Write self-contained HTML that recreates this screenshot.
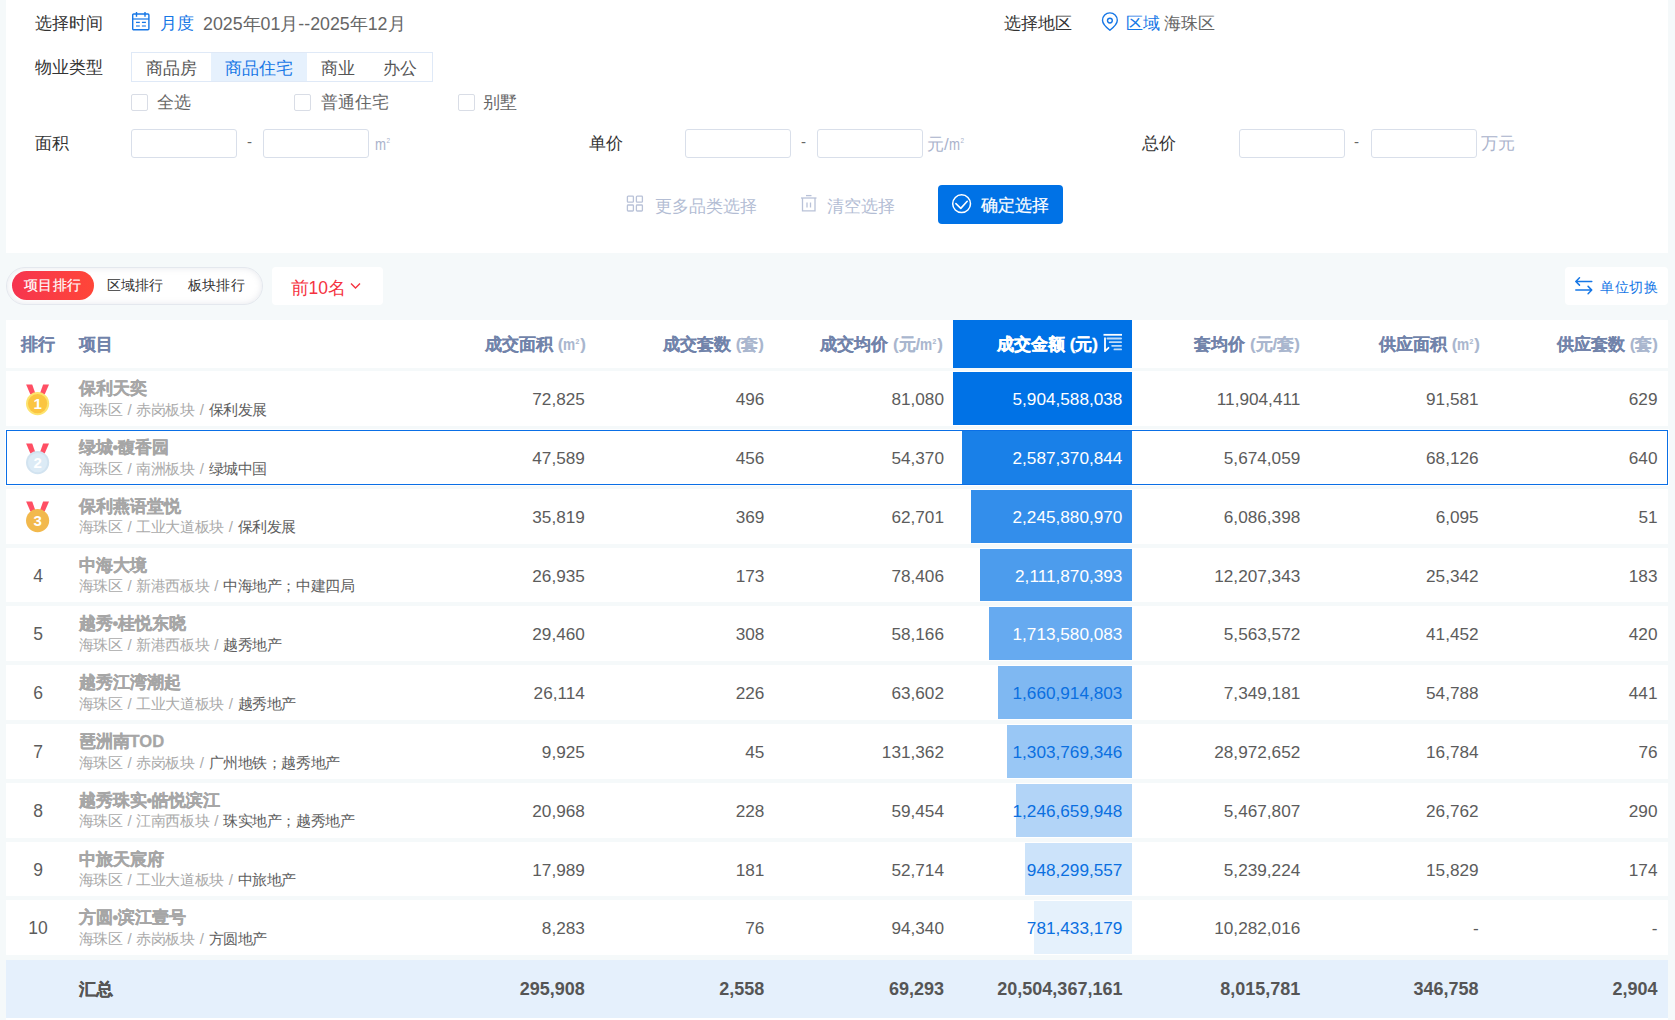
<!DOCTYPE html>
<html><head><meta charset="utf-8">
<style>
*{box-sizing:border-box;margin:0;padding:0}
html,body{width:1675px;height:1020px;overflow:hidden;background:#f5f9fa;font-family:"Liberation Sans",sans-serif;color:#333}
.a{position:absolute;white-space:nowrap}
.panel{position:absolute;left:6px;top:0;width:1662px;height:252.5px;background:#fff}
.lbl{font-size:17px;line-height:20px;color:#333}
.blue{color:#1677e6}
.gray{color:#666}
.inp{position:absolute;height:28.5px;width:105.5px;border:1px solid #d9dfea;border-radius:3px;background:#fff}
.unit{font-size:17px;line-height:20px;color:#aab3cc}
.m2{display:inline-block;font-family:"Liberation Sans";font-size:16.5px;transform:scaleX(0.8);transform-origin:0 0;margin-right:-2.6px}
.m2 sup{font-size:8px;vertical-align:0;position:relative;top:-7px;margin-left:0.5px}
.dash{font-size:15px;line-height:20px;color:#666}
.cb{position:absolute;width:16.5px;height:16.5px;border:1px solid #d9dde6;border-radius:2px;background:#fff}
.seg{position:absolute;left:131px;top:52.3px;width:301.5px;height:29.4px;border:1px solid #dfe9f7;background:#fff}
.seg span{position:absolute;top:0;height:100%;line-height:31px;font-size:17px;color:#555;text-align:center}
.tbl{position:absolute;left:6px;width:1662px}
.hdr{position:absolute;left:6px;top:320.4px;width:1662px;height:47.4px;background:#fff}
.hd{position:absolute;top:0;height:47.4px;line-height:50px;font-size:17px;font-weight:700;color:#7183aa;text-align:right;white-space:nowrap;-webkit-text-stroke:0.1px currentColor}
.hd i{font-style:normal;font-weight:700;color:#a9b6ce}
.hd .m2{font-size:16px;transform:scaleX(0.85);margin-right:-2.2px;font-weight:700}
.hd .m2 sup{font-size:8px;top:-6px}
.row{position:absolute;left:6px;width:1662px;height:54.8px;background:#fff}
.num{position:absolute;top:0;height:100%;line-height:57.5px;font-size:17.2px;color:#5c5c5c;text-align:right;white-space:nowrap}
.rk{position:absolute;left:0;width:64px;top:0;height:100%;line-height:56px;font-size:17.5px;color:#5c5c5c;text-align:center}
.pn{position:absolute;left:72.5px;top:8px;font-size:16.6px;line-height:20px;font-weight:700;color:#a6a6a6;white-space:nowrap;-webkit-text-stroke:0.3px currentColor}
.ps{position:absolute;left:72.5px;top:29.5px;font-size:15px;letter-spacing:-0.45px;line-height:17px;color:#aaa;white-space:nowrap}
.ps b{font-weight:400;color:#5e5e5e}
.sl{margin:0 1.5px}
.bar{position:absolute;top:1px;bottom:1px}
</style></head><body>
<div class="panel"></div>
<!-- row 1 -->
<div class="a lbl" style="left:35px;top:14px">选择时间</div>
<svg class="a" style="left:131px;top:11px" width="19" height="20" viewBox="0 0 19 20"><rect x="1.7" y="3" width="16.2" height="15.7" rx="1" fill="none" stroke="#1677e6" stroke-width="1.4"/><line x1="1.7" y1="8" x2="17.9" y2="8" stroke="#1677e6" stroke-opacity="0.75" stroke-width="1.6"/><line x1="5.5" y1="1" x2="5.5" y2="5.8" stroke="#1677e6" stroke-width="1.4"/><line x1="14" y1="1" x2="14" y2="5.8" stroke="#1677e6" stroke-width="1.4"/><line x1="5" y1="11.4" x2="8.8" y2="11.4" stroke="#1677e6" stroke-width="1.3"/><line x1="10.9" y1="11.4" x2="14.9" y2="11.4" stroke="#1677e6" stroke-width="1.3"/><line x1="5" y1="15" x2="8.8" y2="15" stroke="#1677e6" stroke-opacity="0.75" stroke-width="1.5"/><line x1="10.9" y1="15" x2="14.9" y2="15" stroke="#1677e6" stroke-opacity="0.75" stroke-width="1.5"/></svg>
<div class="a lbl blue" style="left:160px;top:14px">月度</div>
<div class="a lbl gray" style="left:203px;top:14px;font-size:17.8px">2025年01月--2025年12月</div>
<div class="a lbl" style="left:1004px;top:14px">选择地区</div>
<svg class="a" style="left:1100px;top:11px" width="20" height="21" viewBox="0 0 20 21"><path d="M9.9 19.3 C6.2 16.4 2.5 13.2 2.5 9.3 A7.4 7.4 0 0 1 17.3 9.3 C17.3 13.2 13.6 16.4 9.9 19.3Z" fill="none" stroke="#1677e6" stroke-width="1.4" stroke-linejoin="round"/><circle cx="9.9" cy="9.6" r="2.4" fill="none" stroke="#1677e6" stroke-width="1.4"/></svg>
<div class="a lbl blue" style="left:1126px;top:14px">区域</div>
<div class="a lbl gray" style="left:1164px;top:14px">海珠区</div>
<!-- row 2 -->
<div class="a lbl" style="left:35px;top:58px">物业类型</div>
<div class="seg">
 <span style="left:0;width:79px">商品房</span>
 <span style="left:79px;width:95.5px;background:#e6f1fd;color:#1677e6">商品住宅</span>
 <span style="left:174.5px;width:62px">商业</span>
 <span style="left:236.5px;width:62px">办公</span>
</div>
<!-- row 3 -->
<div class="cb" style="left:131px;top:94px"></div>
<div class="a lbl gray" style="left:157px;top:93px">全选</div>
<div class="cb" style="left:294px;top:94px"></div>
<div class="a lbl gray" style="left:321px;top:93px">普通住宅</div>
<div class="cb" style="left:458px;top:94px"></div>
<div class="a lbl gray" style="left:483px;top:93px">别墅</div>
<!-- row 4 -->
<div class="a lbl" style="left:35px;top:134px">面积</div>
<div class="inp" style="left:131px;top:129px"></div>
<div class="a dash" style="left:247px;top:132px">-</div>
<div class="inp" style="left:263px;top:129px"></div>
<div class="a unit" style="left:375px;top:134px"><span class="m2">m<sup>2</sup></span></div>
<div class="a lbl" style="left:589px;top:134px">单价</div>
<div class="inp" style="left:685px;top:129px"></div>
<div class="a dash" style="left:801px;top:132px">-</div>
<div class="inp" style="left:817px;top:129px"></div>
<div class="a unit" style="left:927px;top:134px">元/<span class="m2">m<sup>2</sup></span></div>
<div class="a lbl" style="left:1142px;top:134px">总价</div>
<div class="inp" style="left:1239px;top:129px"></div>
<div class="a dash" style="left:1354px;top:132px">-</div>
<div class="inp" style="left:1371px;top:129px"></div>
<div class="a unit" style="left:1481px;top:134px">万元</div>
<!-- row 5 buttons -->
<svg class="a" style="left:626px;top:195px" width="19" height="18" viewBox="0 0 19 18"><g fill="none" stroke="#b9c2d8" stroke-width="1.3"><rect x="1.4" y="1.2" width="6" height="6" rx="0.8"/><rect x="10.4" y="1.2" width="6" height="6" rx="0.8"/><rect x="1.4" y="10" width="6" height="6" rx="0.8"/><rect x="10.4" y="10" width="6" height="6" rx="0.8"/></g></svg>
<div class="a lbl" style="left:655px;top:197px;color:#b3bdd4">更多品类选择</div>
<svg class="a" style="left:799px;top:194px" width="19" height="19" viewBox="0 0 19 19"><g fill="none" stroke="#b9c2d8" stroke-width="1.3"><line x1="2" y1="4" x2="17.5" y2="4"/><line x1="7" y1="1.6" x2="12.5" y2="1.6"/><path d="M3.5 4 V16.8 H16 V4"/><line x1="8" y1="8.5" x2="8" y2="13.5"/><line x1="11.5" y1="8.5" x2="11.5" y2="13.5"/></g></svg>
<div class="a lbl" style="left:827px;top:197px;color:#b3bdd4">清空选择</div>
<div class="a" style="left:938px;top:185px;width:125px;height:39px;background:#0072e6;border-radius:4px"></div>
<svg class="a" style="left:951px;top:194px" width="22" height="21" viewBox="0 0 22 21"><circle cx="10.6" cy="9.7" r="8.9" fill="none" stroke="#fff" stroke-width="1.5"/><path d="M4.9 9.6 L9.8 14.4 L16.2 7.3" fill="none" stroke="#fff" stroke-width="1.6" stroke-linecap="round" stroke-linejoin="round"/></svg>
<div class="a lbl" style="left:981px;top:195.5px;color:#fff;-webkit-text-stroke:0.2px #fff">确定选择</div>

<!-- tabs -->
<div class="a" style="left:6.3px;top:267.2px;width:256.5px;height:37.4px;border-radius:19px;background:#fff;border:1px solid #e4e8ee;box-shadow:inset 0 0 6px rgba(150,160,180,0.25)"></div>
<div class="a" style="left:12px;top:270.8px;width:82px;height:29.2px;border-radius:15px;background:linear-gradient(90deg,#f6344f,#ff4638)"></div>
<div class="a" style="left:24px;top:275px;font-size:14px;letter-spacing:0.3px;line-height:20px;color:#fff;-webkit-text-stroke:0.2px #fff">项目排行</div>
<div class="a" style="left:106.5px;top:275px;font-size:14px;letter-spacing:0.3px;line-height:20px;color:#333">区域排行</div>
<div class="a" style="left:187.8px;top:275px;font-size:14px;letter-spacing:0.3px;line-height:20px;color:#333">板块排行</div>
<div class="a" style="left:272px;top:267.2px;width:110.5px;height:37.4px;border-radius:4px;background:#fff"></div>
<div class="a" style="left:290.5px;top:277.5px;font-size:17.5px;line-height:20px;color:#f5333f">前10名</div>
<svg class="a" style="left:349px;top:281px" width="13" height="10" viewBox="0 0 13 10"><path d="M2 2.5 L6.5 7 L11 2.5" fill="none" stroke="#f5333f" stroke-width="1.4"/></svg>
<div class="a" style="left:1565px;top:267px;width:103px;height:37.5px;border-radius:4px;background:#fff"></div>
<svg class="a" style="left:1574px;top:276px" width="20" height="20" viewBox="0 0 20 20"><path d="M1.8 5.45 H17.75 M5.5 1.8 L1.8 5.45 L5.5 9.1" fill="none" stroke="#1677e6" stroke-width="1.5" stroke-linecap="round" stroke-linejoin="round"/><path d="M1.8 14.06 H17.75 M14.1 10.4 L17.75 14.06 L14.1 17.75" fill="none" stroke="#1677e6" stroke-width="1.5" stroke-linecap="round" stroke-linejoin="round"/></svg>
<div class="a" style="left:1600px;top:277px;font-size:14px;letter-spacing:0.5px;line-height:20px;color:#1677e6">单位切换</div>

<!-- header -->
<div class="hdr">
 <div class="hd" style="left:15px;text-align:left">排行</div>
 <div class="hd" style="left:72.5px;text-align:left">项目</div>
 <div class="hd" style="right:1082px">成交面积 <i>(<span class="m2">m<sup>2</sup></span>)</i></div>
 <div class="hd" style="right:904px">成交套数 <i>(套)</i></div>
 <div class="hd" style="right:725px">成交均价 <i>(元/<span class="m2">m<sup>2</sup></span>)</i></div>
 <div style="position:absolute;left:946.8px;width:179.2px;top:0;height:100%;background:#0072e6"></div>
 <div class="hd" style="right:570px;color:#fff;-webkit-text-stroke:0.3px #fff">成交金额 <i style="color:#fff;font-weight:700">(元)</i></div>
 <svg style="position:absolute;left:1096px;top:13px" width="21" height="20" viewBox="0 0 21 20"><path d="M1.5 1.8 H20" stroke="#fff" stroke-width="1.8" fill="none"/><path d="M5.4 5.5 H19.1 M7.7 9.2 H19.1 M10.1 12.8 H19.1 M12.4 16.4 H19.1" stroke="rgba(255,255,255,0.75)" stroke-width="1.8" fill="none" stroke-linecap="round"/><path d="M3 5.2 V18.2 L6.5 14.8" stroke="#fff" stroke-width="1.8" fill="none" stroke-linecap="round" stroke-linejoin="round"/></svg>
 <div class="hd" style="right:368px">套均价 <i>(元/套)</i></div>
 <div class="hd" style="right:188px">供应面积 <i>(<span class="m2">m<sup>2</sup></span>)</i></div>
 <div class="hd" style="right:10px">供应套数 <i>(套)</i></div>
</div>
<!-- ROWS -->
<div class="row" style="top:371.20px;"><svg style="position:absolute;left:20px;top:12.5px" width="24" height="32" viewBox="0 0 24 32"><polygon points="0.1,0.4 6.2,0.4 9.7,10.4 4.4,10.4" fill="#ff4f64"/><polygon points="17.1,0.4 23,0.4 18.7,10.4 13.6,10.4" fill="#ff4f64"/><circle cx="11.6" cy="19.6" r="11.6" fill="#fde36d"/><circle cx="11.6" cy="19.6" r="9.6" fill="#fbc541"/><text x="11.6" y="25" text-anchor="middle" font-family="Liberation Sans" font-weight="700" font-size="15" fill="#fff">1</text></svg><div class="pn">保利天奕</div><div class="ps">海珠区 <span class=sl>/</span> 赤岗板块 <span class=sl>/</span> <b>保利发展</b></div><div class="bar" style="right:536.07px;width:178.86px;background:rgba(0,114,230,1.00)"></div><div class="num" style="right:1083.14px;color:#5c5c5c">72,825</div><div class="num" style="right:903.69px;color:#5c5c5c">496</div><div class="num" style="right:724.03px;color:#5c5c5c">81,080</div><div class="num" style="right:545.57px;color:#fff">5,904,588,038</div><div class="num" style="right:367.72px;color:#5c5c5c">11,904,411</div><div class="num" style="right:189.36px;color:#5c5c5c">91,581</div><div class="num" style="right:10.50px;color:#5c5c5c">629</div></div>
<div class="row" style="top:430.00px;outline:1px solid #0a6fe6;outline-offset:-1px;box-shadow:0 0 0 1px #fff;"><svg style="position:absolute;left:20px;top:12.5px" width="24" height="32" viewBox="0 0 24 32"><polygon points="0.1,0.4 6.2,0.4 9.7,10.4 4.4,10.4" fill="#ff4f64"/><polygon points="17.1,0.4 23,0.4 18.7,10.4 13.6,10.4" fill="#ff4f64"/><circle cx="11.6" cy="19.6" r="11.6" fill="#d2e3f0"/><circle cx="11.6" cy="19.6" r="9.6" fill="#dcebf6"/><text x="11.6" y="25" text-anchor="middle" font-family="Liberation Sans" font-weight="700" font-size="15" fill="#fff">2</text></svg><div class="pn">绿城•馥香园</div><div class="ps">海珠区 <span class=sl>/</span> 南洲板块 <span class=sl>/</span> <b>绿城中国</b></div><div class="bar" style="right:536.07px;width:169.91px;background:rgba(0,114,230,0.90)"></div><div class="num" style="right:1083.14px;color:#5c5c5c">47,589</div><div class="num" style="right:903.69px;color:#5c5c5c">456</div><div class="num" style="right:724.03px;color:#5c5c5c">54,370</div><div class="num" style="right:545.57px;color:#fff">2,587,370,844</div><div class="num" style="right:367.72px;color:#5c5c5c">5,674,059</div><div class="num" style="right:189.36px;color:#5c5c5c">68,126</div><div class="num" style="right:10.50px;color:#5c5c5c">640</div></div>
<div class="row" style="top:488.80px;"><svg style="position:absolute;left:20px;top:12.5px" width="24" height="32" viewBox="0 0 24 32"><polygon points="0.1,0.4 6.2,0.4 9.7,10.4 4.4,10.4" fill="#ff4f64"/><polygon points="17.1,0.4 23,0.4 18.7,10.4 13.6,10.4" fill="#ff4f64"/><circle cx="11.6" cy="19.6" r="11.6" fill="#f2b94d"/><circle cx="11.6" cy="19.6" r="9.6" fill="#f2b94d"/><text x="11.6" y="25" text-anchor="middle" font-family="Liberation Sans" font-weight="700" font-size="15" fill="#fff">3</text></svg><div class="pn">保利燕语堂悦</div><div class="ps">海珠区 <span class=sl>/</span> 工业大道板块 <span class=sl>/</span> <b>保利发展</b></div><div class="bar" style="right:536.07px;width:160.97px;background:rgba(0,114,230,0.80)"></div><div class="num" style="right:1083.14px;color:#5c5c5c">35,819</div><div class="num" style="right:903.69px;color:#5c5c5c">369</div><div class="num" style="right:724.03px;color:#5c5c5c">62,701</div><div class="num" style="right:545.57px;color:#fff">2,245,880,970</div><div class="num" style="right:367.72px;color:#5c5c5c">6,086,398</div><div class="num" style="right:189.36px;color:#5c5c5c">6,095</div><div class="num" style="right:10.50px;color:#5c5c5c">51</div></div>
<div class="row" style="top:547.60px;"><div class="rk">4</div><div class="pn">中海大境</div><div class="ps">海珠区 <span class=sl>/</span> 新港西板块 <span class=sl>/</span> <b>中海地产；中建四局</b></div><div class="bar" style="right:536.07px;width:152.03px;background:rgba(0,114,230,0.70)"></div><div class="num" style="right:1083.14px;color:#5c5c5c">26,935</div><div class="num" style="right:903.69px;color:#5c5c5c">173</div><div class="num" style="right:724.03px;color:#5c5c5c">78,406</div><div class="num" style="right:545.57px;color:#fff">2,111,870,393</div><div class="num" style="right:367.72px;color:#5c5c5c">12,207,343</div><div class="num" style="right:189.36px;color:#5c5c5c">25,342</div><div class="num" style="right:10.50px;color:#5c5c5c">183</div></div>
<div class="row" style="top:606.40px;"><div class="rk">5</div><div class="pn">越秀•桂悦东晓</div><div class="ps">海珠区 <span class=sl>/</span> 新港西板块 <span class=sl>/</span> <b>越秀地产</b></div><div class="bar" style="right:536.07px;width:143.09px;background:rgba(0,114,230,0.60)"></div><div class="num" style="right:1083.14px;color:#5c5c5c">29,460</div><div class="num" style="right:903.69px;color:#5c5c5c">308</div><div class="num" style="right:724.03px;color:#5c5c5c">58,166</div><div class="num" style="right:545.57px;color:#fff">1,713,580,083</div><div class="num" style="right:367.72px;color:#5c5c5c">5,563,572</div><div class="num" style="right:189.36px;color:#5c5c5c">41,452</div><div class="num" style="right:10.50px;color:#5c5c5c">420</div></div>
<div class="row" style="top:665.20px;"><div class="rk">6</div><div class="pn">越秀江湾潮起</div><div class="ps">海珠区 <span class=sl>/</span> 工业大道板块 <span class=sl>/</span> <b>越秀地产</b></div><div class="bar" style="right:536.07px;width:134.14px;background:rgba(0,114,230,0.50)"></div><div class="num" style="right:1083.14px;color:#5c5c5c">26,114</div><div class="num" style="right:903.69px;color:#5c5c5c">226</div><div class="num" style="right:724.03px;color:#5c5c5c">63,602</div><div class="num" style="right:545.57px;color:#0a6fe0">1,660,914,803</div><div class="num" style="right:367.72px;color:#5c5c5c">7,349,181</div><div class="num" style="right:189.36px;color:#5c5c5c">54,788</div><div class="num" style="right:10.50px;color:#5c5c5c">441</div></div>
<div class="row" style="top:724.00px;"><div class="rk">7</div><div class="pn">琶洲南TOD</div><div class="ps">海珠区 <span class=sl>/</span> 赤岗板块 <span class=sl>/</span> <b>广州地铁；越秀地产</b></div><div class="bar" style="right:536.07px;width:125.20px;background:rgba(0,114,230,0.40)"></div><div class="num" style="right:1083.14px;color:#5c5c5c">9,925</div><div class="num" style="right:903.69px;color:#5c5c5c">45</div><div class="num" style="right:724.03px;color:#5c5c5c">131,362</div><div class="num" style="right:545.57px;color:#0a6fe0">1,303,769,346</div><div class="num" style="right:367.72px;color:#5c5c5c">28,972,652</div><div class="num" style="right:189.36px;color:#5c5c5c">16,784</div><div class="num" style="right:10.50px;color:#5c5c5c">76</div></div>
<div class="row" style="top:782.80px;"><div class="rk">8</div><div class="pn">越秀珠实•皓悦滨江</div><div class="ps">海珠区 <span class=sl>/</span> 江南西板块 <span class=sl>/</span> <b>珠实地产；越秀地产</b></div><div class="bar" style="right:536.07px;width:116.26px;background:rgba(0,114,230,0.30)"></div><div class="num" style="right:1083.14px;color:#5c5c5c">20,968</div><div class="num" style="right:903.69px;color:#5c5c5c">228</div><div class="num" style="right:724.03px;color:#5c5c5c">59,454</div><div class="num" style="right:545.57px;color:#0a6fe0">1,246,659,948</div><div class="num" style="right:367.72px;color:#5c5c5c">5,467,807</div><div class="num" style="right:189.36px;color:#5c5c5c">26,762</div><div class="num" style="right:10.50px;color:#5c5c5c">290</div></div>
<div class="row" style="top:841.60px;"><div class="rk">9</div><div class="pn">中旅天宸府</div><div class="ps">海珠区 <span class=sl>/</span> 工业大道板块 <span class=sl>/</span> <b>中旅地产</b></div><div class="bar" style="right:536.07px;width:107.31px;background:rgba(0,114,230,0.20)"></div><div class="num" style="right:1083.14px;color:#5c5c5c">17,989</div><div class="num" style="right:903.69px;color:#5c5c5c">181</div><div class="num" style="right:724.03px;color:#5c5c5c">52,714</div><div class="num" style="right:545.57px;color:#0a6fe0">948,299,557</div><div class="num" style="right:367.72px;color:#5c5c5c">5,239,224</div><div class="num" style="right:189.36px;color:#5c5c5c">15,829</div><div class="num" style="right:10.50px;color:#5c5c5c">174</div></div>
<div class="row" style="top:900.40px;"><div class="rk">10</div><div class="pn">方圆•滨江壹号</div><div class="ps">海珠区 <span class=sl>/</span> 赤岗板块 <span class=sl>/</span> <b>方圆地产</b></div><div class="bar" style="right:536.07px;width:98.37px;background:rgba(0,114,230,0.10)"></div><div class="num" style="right:1083.14px;color:#5c5c5c">8,283</div><div class="num" style="right:903.69px;color:#5c5c5c">76</div><div class="num" style="right:724.03px;color:#5c5c5c">94,340</div><div class="num" style="right:545.57px;color:#0a6fe0">781,433,179</div><div class="num" style="right:367.72px;color:#5c5c5c">10,282,016</div><div class="num" style="right:189.36px;color:#5c5c5c">-</div><div class="num" style="right:10.50px;color:#5c5c5c">-</div></div>
<div class="row" style="top:959.75px;height:57.85px;background:#e5f0fc"><div class="pn" style="top:0;line-height:59px;color:#555">汇总</div><div class="num" style="right:1083.14px;line-height:58px;font-size:18px;font-weight:700;color:#555">295,908</div><div class="num" style="right:903.69px;line-height:58px;font-size:18px;font-weight:700;color:#555">2,558</div><div class="num" style="right:724.03px;line-height:58px;font-size:18px;font-weight:700;color:#555">69,293</div><div class="num" style="right:545.57px;line-height:58px;font-size:18px;font-weight:700;color:#555">20,504,367,161</div><div class="num" style="right:367.72px;line-height:58px;font-size:18px;font-weight:700;color:#555">8,015,781</div><div class="num" style="right:189.36px;line-height:58px;font-size:18px;font-weight:700;color:#555">346,758</div><div class="num" style="right:10.50px;line-height:58px;font-size:18px;font-weight:700;color:#555">2,904</div></div>
<div class="a" style="left:6px;top:1017.6px;width:1662px;height:3px;background:#fff"></div>
</body></html>
